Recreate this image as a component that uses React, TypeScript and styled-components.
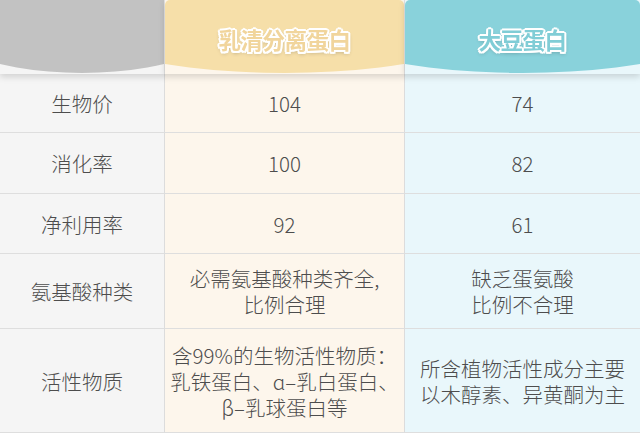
import styled, { createGlobalStyle } from "styled-components";

// ---------------------------------------------------------------------

type Tone = "gray" | "whey" | "soy";

const body: Record<Tone, string> = {
  gray: "#f5f5f5",
  whey: "#fdf6ec",
  soy: "#e9f7fb",
};

const head: Record<Tone, string> = {
  gray: "#c2c2c2",
  whey: "#f6dfa9",
  soy: "#89d2db",
};

const ink: Record<Tone, string> = {
  gray: "#c2c2c2",
  whey: "#f1d59c",
  soy: "#80cdd6",
};

const rows: { label: string; whey: string[]; soy: string[]; height: number }[] = [
  { label: "生物价", whey: ["104"], soy: ["74"], height: 59 },
  { label: "消化率", whey: ["100"], soy: ["82"], height: 61 },
  { label: "净利用率", whey: ["92"], soy: ["61"], height: 60 },
  {
    label: "氨基酸种类",
    whey: ["必需氨基酸种类齐全,", "比例合理"],
    soy: ["缺乏蛋氨酸", "比例不合理"],
    height: 75,
  },
  {
    label: "活性物质",
    whey: ["含99%的生物活性物质：", "乳铁蛋白、ɑ–乳白蛋白、", "β–乳球蛋白等"],
    soy: ["所含植物活性成分主要", "以木醇素、异黄酮为主"],
    height: 104,
  },
];

export default function App() {
  return (
    <>
      <GlobalStyle />
      <Table>
        <HeadCell $tone="gray">
          <HeadShape $tone="gray" />
        </HeadCell>
        <HeadCell $tone="whey">
          <HeadShape $tone="whey">
            <HeadLabel $tone="whey">乳清分离蛋白</HeadLabel>
          </HeadShape>
        </HeadCell>
        <HeadCell $tone="soy">
          <HeadShape $tone="soy">
            <HeadLabel $tone="soy">大豆蛋白</HeadLabel>
          </HeadShape>
        </HeadCell>

        {rows.map((row) => (
          <Row key={row.label} $height={row.height}>
            <Cell $tone="gray">{row.label}</Cell>
            <Cell $tone="whey">
              {row.whey.map((line) => (
                <Line key={line}>{line}</Line>
              ))}
            </Cell>
            <Cell $tone="soy" $last>
              {row.soy.map((line) => (
                <Line key={line}>{line}</Line>
              ))}
            </Cell>
          </Row>
        ))}
      </Table>
    </>
  );
}

//style
const GlobalStyle = createGlobalStyle`
  html, body {
    margin: 0;
    padding: 0;
    background: #ffffff;
  }
  body {
    font-family: "Noto Sans CJK SC", "Noto Sans", sans-serif;
  }
`;

const Table = styled.div`
  width: 640px;
  height: 433px;
  overflow: hidden;
  display: grid;
  grid-template-columns: 165px 240px 235px;
`;

const HeadCell = styled.div<{ $tone: Tone }>`
  position: relative;
  z-index: 1;
  height: 74px;
  background: ${(p) => body[p.$tone]};
  border-right: ${(p) => (p.$tone === "soy" ? "none" : "1px solid #e2e2e2")};
  filter: drop-shadow(0 3px 3px rgba(0, 0, 0, 0.14));
`;

const HeadShape = styled.div<{ $tone: Tone }>`
  height: 73px;
  background: ${(p) => head[p.$tone]};
  clip-path: ellipse(104% 73px at 50% 0);
  border-radius: ${(p) => (p.$tone === "gray" ? "0" : "5px 5px 0 0")};
  display: flex;
  justify-content: center;
  padding-top: 26px;
  box-sizing: border-box;
`;

const HeadLabel = styled.div<{ $tone: Tone }>`
  font-size: 22.5px;
  line-height: 26px;
  font-weight: 700;
  letter-spacing: -0.5px;
  color: ${(p) => ink[p.$tone]};
  text-shadow: 2px 0 0 #fff, -2px 0 0 #fff, 0 2px 0 #fff, 0 -2px 0 #fff,
    1.5px 1.5px 0 #fff, -1.5px 1.5px 0 #fff, 1.5px -1.5px 0 #fff,
    -1.5px -1.5px 0 #fff, 0 2px 4px rgba(0, 0, 0, 0.3);
`;

const Row = styled.div<{ $height: number }>`
  display: contents;
  & > div {
    height: ${(p) => p.$height}px;
  }
`;

const Cell = styled.div<{ $tone: Tone; $last?: boolean }>`
  box-sizing: border-box;
  background: ${(p) => body[p.$tone]};
  border-bottom: 1px solid #dedede;
  border-right: ${(p) => (p.$last ? "none" : "1px solid #dcdcdc")};
  display: flex;
  flex-direction: column;
  align-items: center;
  justify-content: center;
  color: #4d4d4d;
  font-size: 20.5px;
  font-weight: 300;
  line-height: 26px;
  white-space: nowrap;
`;

const Line = styled.span`
  display: block;
  text-align: center;
`;
